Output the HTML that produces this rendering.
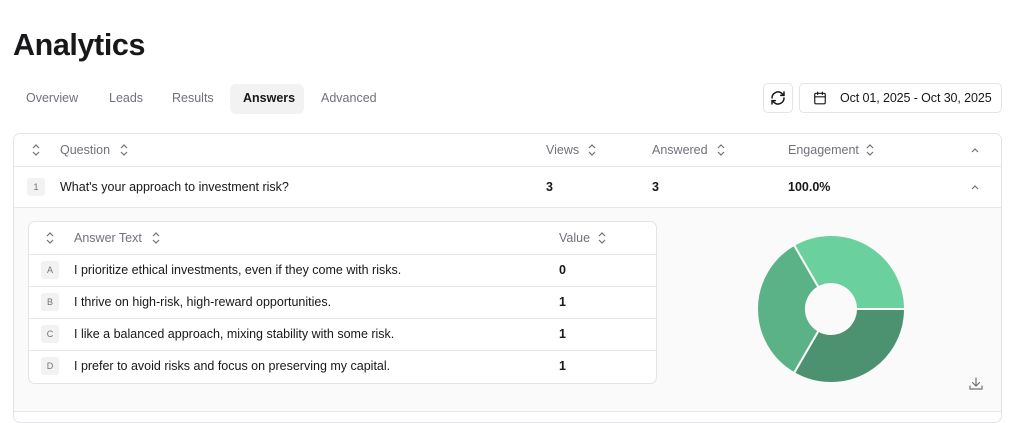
<!DOCTYPE html>
<html><head><meta charset="utf-8"><style>
*{box-sizing:border-box;margin:0;padding:0}
body{width:1024px;height:416px;background:#fff;font-family:"Liberation Sans",sans-serif;color:#18181b;position:relative;overflow:hidden}
.a{position:absolute;white-space:nowrap}
.tab{font-size:12.5px;color:#71717a;top:91px}
.h{font-size:12.5px;color:#71717a}
.t{font-size:12.5px;color:#18181b}
.b{font-weight:bold}
.badge{position:absolute;width:18px;height:18px;background:#f2f2f2;border-radius:3px;font-size:9px;color:#71717a;text-align:center;line-height:18px}
.hl{position:absolute;height:1px;background:#e8e8e8}
svg.ud{position:absolute}
</style></head><body>
<div class="a b" style="left:13px;top:28px;font-size:30.5px;letter-spacing:-0.4px">Analytics</div>

<div class="a" style="left:230px;top:84px;width:74px;height:30px;background:#f2f2f2;border-radius:6px"></div>
<div class="a tab" style="left:26px">Overview</div>
<div class="a tab" style="left:109px">Leads</div>
<div class="a tab" style="left:172px">Results</div>
<div class="a tab b" style="left:243px;color:#18181b">Answers</div>
<div class="a tab" style="left:321px">Advanced</div>

<div class="a" style="left:763px;top:83px;width:30px;height:30px;border:1px solid #e4e4e7;border-radius:5px"></div>
<svg class="a" style="left:770px;top:90px" width="16" height="16" viewBox="0 0 24 24" fill="none" stroke="#18181b" stroke-width="2.2" stroke-linecap="round" stroke-linejoin="round"><path d="M3 12a9 9 0 0 1 15-6.7L21 8"/><path d="M21 3v5h-5"/><path d="M21 12a9 9 0 0 1-15 6.7L3 16"/><path d="M8 16H3v5"/></svg>
<div class="a" style="left:799px;top:83px;width:203px;height:30px;border:1px solid #e4e4e7;border-radius:5px"></div>
<svg class="a" style="left:813px;top:91px" width="14" height="14" viewBox="0 0 24 24" fill="none" stroke="#18181b" stroke-width="2" stroke-linecap="round"><rect x="3" y="4" width="18" height="18" rx="2"/><path d="M16 2v4M8 2v4M3 10h18"/></svg>
<div class="a" style="left:840px;top:91px;font-size:12.5px;letter-spacing:-0.1px">Oct 01, 2025 - Oct 30, 2025</div>

<div class="a" style="left:13px;top:133px;width:989px;height:290px;border:1px solid #e4e4e7;border-radius:7px;overflow:hidden">
 <div class="a" style="left:0;top:74px;width:989px;height:204px;background:#fafafa"></div>
 <div class="hl" style="left:0;top:32px;width:989px"></div>
 <div class="hl" style="left:0;top:73px;width:989px"></div>
 <div class="hl" style="left:0;top:277px;width:989px"></div>
</div>
<svg class="ud" style="left:31px;top:144px" width="10" height="12" viewBox="0 0 10 12" fill="none" stroke="#71717a" stroke-width="1.2"><path d="M2 4l3-3 3 3M2 8l3 3 3-3"/></svg>
<div class="a h" style="left:60px;top:143px">Question</div>
<svg class="ud" style="left:119px;top:144px" width="10" height="12" viewBox="0 0 10 12" fill="none" stroke="#71717a" stroke-width="1.2"><path d="M2 4l3-3 3 3M2 8l3 3 3-3"/></svg>
<div class="a h" style="left:546px;top:143px">Views</div>
<svg class="ud" style="left:587px;top:144px" width="10" height="12" viewBox="0 0 10 12" fill="none" stroke="#71717a" stroke-width="1.2"><path d="M2 4l3-3 3 3M2 8l3 3 3-3"/></svg>
<div class="a h" style="left:652px;top:143px">Answered</div>
<svg class="ud" style="left:716px;top:144px" width="10" height="12" viewBox="0 0 10 12" fill="none" stroke="#71717a" stroke-width="1.2"><path d="M2 4l3-3 3 3M2 8l3 3 3-3"/></svg>
<div class="a h" style="left:788px;top:143px">Engagement</div>
<svg class="ud" style="left:865px;top:144px" width="10" height="12" viewBox="0 0 10 12" fill="none" stroke="#71717a" stroke-width="1.2"><path d="M2 4l3-3 3 3M2 8l3 3 3-3"/></svg>
<svg class="ud" style="left:970px;top:147px" width="10" height="6" viewBox="0 0 10 6" fill="none" stroke="#71717a" stroke-width="1.2"><path d="M2 5l3-3 3 3"/></svg>
<div class="badge" style="left:27px;top:178px">1</div>
<div class="a t" style="left:60px;top:180px">What's your approach to investment risk?</div>
<div class="a t b" style="left:546px;top:180px">3</div>
<div class="a t b" style="left:652px;top:180px">3</div>
<div class="a t b" style="left:788px;top:180px">100.0%</div>
<svg class="ud" style="left:970px;top:184px" width="10" height="6" viewBox="0 0 10 6" fill="none" stroke="#71717a" stroke-width="1.2"><path d="M2 5l3-3 3 3"/></svg>

<div class="a" style="left:28px;top:221px;width:629px;height:163px;background:#fff;border:1px solid #e4e4e7;border-radius:7px"></div>
<div class="hl" style="left:29px;top:254px;width:627px"></div>
<div class="hl" style="left:29px;top:286px;width:627px"></div>
<div class="hl" style="left:29px;top:318px;width:627px"></div>
<div class="hl" style="left:29px;top:350px;width:627px"></div>
<svg class="ud" style="left:45px;top:232px" width="10" height="12" viewBox="0 0 10 12" fill="none" stroke="#71717a" stroke-width="1.2"><path d="M2 4l3-3 3 3M2 8l3 3 3-3"/></svg>
<div class="a h" style="left:74px;top:231px">Answer Text</div>
<svg class="ud" style="left:151px;top:232px" width="10" height="12" viewBox="0 0 10 12" fill="none" stroke="#71717a" stroke-width="1.2"><path d="M2 4l3-3 3 3M2 8l3 3 3-3"/></svg>
<div class="a h" style="left:559px;top:231px">Value</div>
<svg class="ud" style="left:597px;top:232px" width="10" height="12" viewBox="0 0 10 12" fill="none" stroke="#71717a" stroke-width="1.2"><path d="M2 4l3-3 3 3M2 8l3 3 3-3"/></svg>

<div class="badge" style="left:41px;top:261px">A</div>
<div class="a t" style="left:74px;top:263px">I prioritize ethical investments, even if they come with risks.</div>
<div class="a t b" style="left:559px;top:263px">0</div>
<div class="badge" style="left:41px;top:293px">B</div>
<div class="a t" style="left:74px;top:295px">I thrive on high-risk, high-reward opportunities.</div>
<div class="a t b" style="left:559px;top:295px">1</div>
<div class="badge" style="left:41px;top:325px">C</div>
<div class="a t" style="left:74px;top:327px">I like a balanced approach, mixing stability with some risk.</div>
<div class="a t b" style="left:559px;top:327px">1</div>
<div class="badge" style="left:41px;top:357px">D</div>
<div class="a t" style="left:74px;top:359px">I prefer to avoid risks and focus on preserving my capital.</div>
<div class="a t b" style="left:559px;top:359px">1</div>

<svg class="a" style="left:0;top:0" width="1024" height="416">
<g stroke="#fafafa" stroke-width="2">
<path d="M905 309 A74 74 0 0 1 794 373.1 L818.5 330.7 A25 25 0 0 0 856 309Z" fill="#4c9170"/>
<path d="M794 373.1 A74 74 0 0 1 794 244.9 L818.5 287.3 A25 25 0 0 0 818.5 330.7Z" fill="#5bb287"/>
<path d="M794 244.9 A74 74 0 0 1 905 309 L856 309 A25 25 0 0 0 818.5 287.3Z" fill="#6ad19e"/>
</g>
<g fill="none" stroke="#71717a" stroke-width="1.2" stroke-linecap="round"><path d="M976 378v8M972.5 382.5l3.5 3.5 3.5-3.5M970 386v3h12v-3"/></g>
</svg>
</body></html>
